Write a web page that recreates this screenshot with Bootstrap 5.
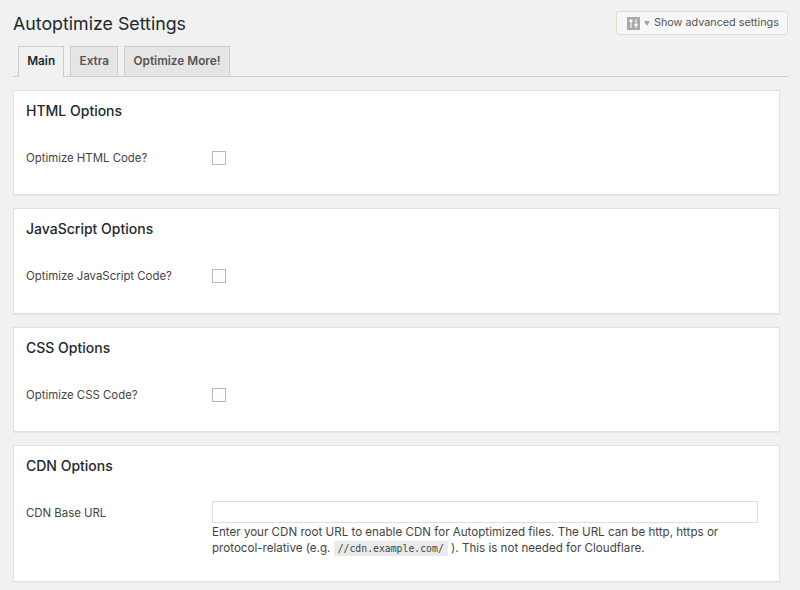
<!DOCTYPE html>
<html lang="en">
<head>
  <meta charset="UTF-8">
  <title>Autoptimize Settings</title>
  <link href="https://cdn.jsdelivr.net/npm/bootstrap@5.3.0/dist/css/bootstrap.min.css" rel="stylesheet">
  <style>
    html, body { height: 590px; overflow: hidden; }
    body { background-color: #f1f1f1; color: #444; font-family: Inter, "Noto Sans", sans-serif; font-size: 11.4px; }
    .wrap-page { padding: 11px 12px 0 13px; }
    .page-head { height: 24px; margin-bottom: 11px; }
    .page-title { font-size: 17.8px; line-height: 27px; font-weight: 400; color: #23282d; margin: 0; }
    .adv-btn { width: 172px; height: 24px; padding: 0 0 0 10px; font-size: 10.8px; line-height: 20px; color: #555; background: #f7f7f7; border: 1px solid #e6dcc4; border-radius: 3px; }
    .adv-arrow { width: 0; height: 0; border: 3.5px solid transparent; border-top: 5px solid #a0a5aa; border-bottom: 0; }
    .tab-row { padding-left: 5px; gap: 6px; border-bottom: 1px solid #ccc; height: 31px; margin-bottom: 13px; }
    .tab-row .nav-link { height: 30px; padding: 0 8.2px; font-size: 11.8px; font-weight: 600; line-height: 29px; color: #555; background: #e5e5e5; border: 1px solid #ccc; border-bottom: 0; border-radius: 0; }
    .tab-row .nav-link.active { height: 31px; color: #23282d; background: #f1f1f1; }
    .opt-card { width: 767px; height: 105.33px; margin-bottom: 13px; background: #fff; border: 1px solid #e0e0e0; border-radius: 0; box-shadow: 0 1px 1px rgba(0,0,0,.04); }
    .opt-card.tall { height: 137px; }
    .opt-card .card-body { padding: 11px 12px 0; }
    .opt-title { font-size: 14px; line-height: 18px; font-weight: 500; color: #23282d; margin-bottom: 29px; }
    .opt-label { width: 186px; flex: none; line-height: 18px; color: #444; }
    .opt-check.form-check-input { width: 14px; height: 14px; margin: 2px 0 0; background-color: #fdfdfd; border: 1px solid #b4b9be; border-radius: 0; }
    .opt-input.form-control { width: 546px; height: 22px; padding: 0 4px; margin-top: -3px; border: 1px solid #ddd; border-radius: 0; }
    .opt-help { width: 546px; margin: 1px 0 0; line-height: 16px; font-size: 11.6px; color: #444; }
    .opt-help code { padding: 2px 4px; font-family: "DejaVu Sans Mono", monospace; font-size: 9.8px; line-height: 1; color: #444; background: #eaeaea; }
  </style>
</head>
<body>
  <div class="wrap-page">
    <div class="page-head d-flex justify-content-between align-items-center">
      <h1 class="page-title">Autoptimize Settings</h1>
      <button class="adv-btn d-flex align-items-center" type="button">
        <svg width="13" height="13" viewBox="0 0 13 13" class="me-1 flex-none">
          <rect width="13" height="13" fill="#a7aaad"/>
          <path d="M4 2v9M9 2v9" stroke="#fff" stroke-width="1"/>
          <path d="M2.5 4h3M7.5 8h3" stroke="#fff" stroke-width="2"/>
        </svg>
        <span class="adv-arrow me-1"></span>
        <span>Show advanced settings</span>
      </button>
    </div>

    <ul class="nav tab-row">
      <li class="nav-item"><a class="nav-link active" href="#">Main</a></li>
      <li class="nav-item"><a class="nav-link" href="#">Extra</a></li>
      <li class="nav-item"><a class="nav-link" href="#">Optimize More!</a></li>
    </ul>

    <div class="card opt-card">
      <div class="card-body">
        <h3 class="opt-title">HTML Options</h3>
        <div class="d-flex">
          <div class="opt-label">Optimize HTML Code?</div>
          <input class="form-check-input opt-check" type="checkbox">
        </div>
      </div>
    </div>

    <div class="card opt-card">
      <div class="card-body">
        <h3 class="opt-title">JavaScript Options</h3>
        <div class="d-flex">
          <div class="opt-label">Optimize JavaScript Code?</div>
          <input class="form-check-input opt-check" type="checkbox">
        </div>
      </div>
    </div>

    <div class="card opt-card">
      <div class="card-body">
        <h3 class="opt-title">CSS Options</h3>
        <div class="d-flex">
          <div class="opt-label">Optimize CSS Code?</div>
          <input class="form-check-input opt-check" type="checkbox">
        </div>
      </div>
    </div>

    <div class="card opt-card tall">
      <div class="card-body">
        <h3 class="opt-title">CDN Options</h3>
        <div class="d-flex">
          <div class="opt-label">CDN Base URL</div>
          <div>
            <input class="form-control opt-input" type="text">
            <p class="opt-help">Enter your CDN root URL to enable CDN for Autoptimized files. The URL can be http, https or protocol-relative (e.g. <code>//cdn.example.com/</code> ). This is not needed for Cloudflare.</p>
          </div>
        </div>
      </div>
    </div>
  </div>
  <script src="https://cdn.jsdelivr.net/npm/bootstrap@5.3.0/dist/js/bootstrap.bundle.min.js"></script>
</body>
</html>
